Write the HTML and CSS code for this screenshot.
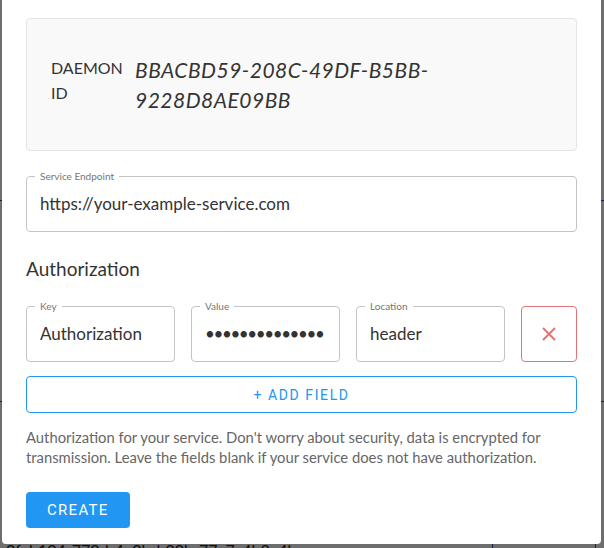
FILE: index.html
```html
<!DOCTYPE html>
<html lang="en">
<head>
    <meta charset="UTF-8">
    <meta name="viewport" content="width=device-width, initial-scale=1.0">
    <title>New Service</title>
    <link rel="stylesheet" href="styles.css">
</head>
<body>
    <div class="page">
        <div class="page-row tall"></div>
        <div class="page-row mid"></div>
        <div class="page-row short"></div>
        <div class="page-row last">
            <span class="page-id">0feb104-770d-4e0b-b00b-77a7c4b3e4be</span>
            <span class="page-cell"></span>
            <span class="page-cell end"></span>
        </div>
    </div>

    <div class="backdrop"></div>

    <div class="modal">
        <div class="daemon">
            <div class="daemon-label">DAEMON ID</div>
            <div class="daemon-id">BBACBD59-208C-49DF-B5BB-9228D8AE09BB</div>
        </div>

        <fieldset class="field">
            <legend>Service Endpoint</legend>
            <div class="field-value">https://your-example-service.com</div>
        </fieldset>

        <h3 class="section-title">Authorization</h3>

        <div class="auth-row">
            <fieldset class="field">
                <legend>Key</legend>
                <div class="field-value">Authorization</div>
            </fieldset>
            <fieldset class="field">
                <legend>Value</legend>
                <div class="field-value secret">••••••••••••••</div>
            </fieldset>
            <fieldset class="field">
                <legend>Location</legend>
                <div class="field-value">header</div>
            </fieldset>
            <button class="delete-button" title="Remove">
                <svg width="14" height="14" viewBox="0 0 14 14">
                    <path d="M1 1 L13 13 M13 1 L1 13" stroke="#e57373" stroke-width="2" fill="none"/>
                </svg>
            </button>
        </div>

        <button class="add-button">+ ADD FIELD</button>

        <p class="help">Authorization for your service. Don't worry about security, data is encrypted for transmission. Leave the fields blank if your service does not have authorization.</p>

        <button class="create-button">CREATE</button>
    </div>
</body>
</html>
```

FILE: styles.css
```css
body {
    margin: 0;
    font-family: Lato, "Noto Sans", sans-serif;
    background-color: #fff;
    height: 548px;
    overflow: hidden;
}
.page-row {
    border-bottom: 1px solid #2f4f9a;
}
.page-row.tall {
    height: 200px;
}
.page-row.mid {
    height: 200px;
}
.page-row.short {
    height: 134px;
    border-bottom: none;
}
.page-row.last {
    display: flex;
    height: 30px;
    border-bottom: none;
}
.page-id {
    flex: none;
    width: 486px;
    padding: 4px 0 0 6px;
    font-size: 16px;
    color: #222;
    white-space: nowrap;
}
.page-cell {
    flex: none;
    width: 102px;
    border-left: 1px solid #2f4f9a;
}
.page-cell.end {
    flex: 1;
    width: auto;
}
.backdrop {
    position: fixed;
    top: 0;
    left: 0;
    right: 0;
    bottom: 0;
    background-color: rgba(0, 0, 0, 0.57);
}
.modal {
    position: fixed;
    top: -6px;
    left: 2px;
    right: 3px;
    padding: 24px 24px 16px;
    background-color: #fff;
    border-radius: 4px;
}
.daemon {
    display: grid;
    grid-template-columns: 72px 1fr;
    column-gap: 12px;
    align-content: center;
    height: 131px;
    padding: 0 24px;
    border: 1px solid #e4e4e4;
    border-radius: 4px;
    background-color: #f9f9f9;
}
.daemon-label {
    font-size: 16px;
    line-height: 25px;
    color: #333;
}
.daemon-id {
    max-width: 330px;
    font-size: 21px;
    line-height: 30px;
    letter-spacing: 0.5px;
    font-style: italic;
    color: #333;
}
.field {
    margin: 19px 0 0;
    padding: 0 8px;
    min-width: 0;
    border: 1px solid #c4c4c4;
    border-radius: 4px;
}
.field legend {
    padding: 0 5px;
    font-size: 10px;
    line-height: 12px;
    color: #757575;
}
.field-value {
    display: flex;
    align-items: center;
    box-sizing: border-box;
    height: 49px;
    padding: 0 5px 6px;
    font-size: 17px;
    color: #333;
    white-space: nowrap;
    overflow: hidden;
}
.field-value.secret {
    letter-spacing: -1.4px;
}
.section-title {
    margin: 25px 0 0;
    font-size: 19px;
    line-height: 24px;
    font-weight: 400;
    color: #333;
}
.auth-row {
    display: grid;
    grid-template-columns: 1fr 1fr 1fr 56px;
    column-gap: 16px;
    align-items: end;
    margin-top: 19px;
}
.auth-row .field {
    margin: 0;
}
.delete-button {
    display: flex;
    justify-content: center;
    align-items: center;
    height: 56px;
    padding: 0;
    background-color: #fff;
    border: 1px solid #e57373;
    border-radius: 4px;
    cursor: pointer;
}
.add-button {
    display: block;
    width: 100%;
    height: 37px;
    margin-top: 14px;
    background-color: #fff;
    border: 1px solid #2196f3;
    border-radius: 4px;
    color: #2196f3;
    font-family: Roboto, sans-serif;
    font-size: 14px;
    letter-spacing: 1.6px;
    cursor: pointer;
}
.help {
    margin: 14px 0 0;
    font-size: 14.8px;
    line-height: 20px;
    color: #666;
}
.create-button {
    display: block;
    height: 36px;
    margin-top: 25px;
    padding: 0 21px;
    background-color: #2196f3;
    border: none;
    border-radius: 4px;
    color: #fff;
    font-family: Roboto, sans-serif;
    font-size: 15px;
    letter-spacing: 1.3px;
    cursor: pointer;
}
```
